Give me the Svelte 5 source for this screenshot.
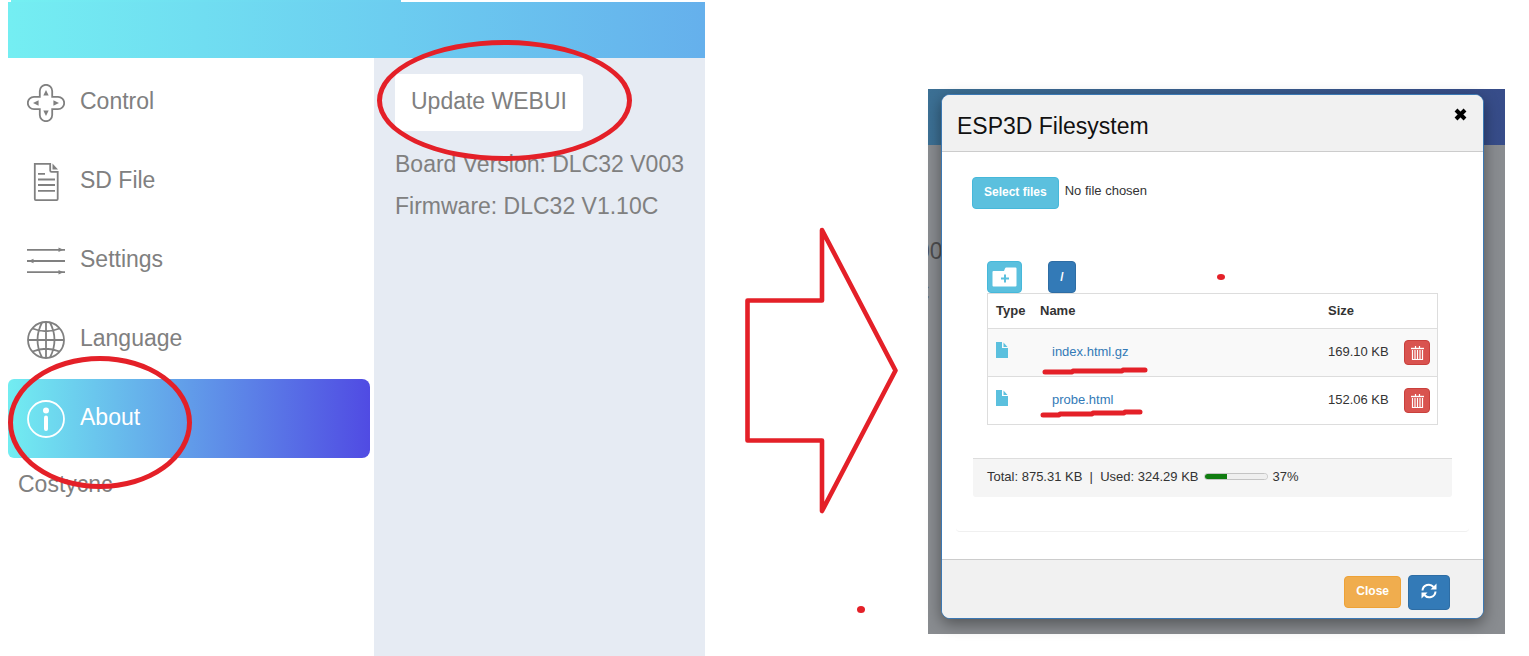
<script>
  const menu = [
    { id: 'control', label: 'Control' },
    { id: 'sd', label: 'SD File' },
    { id: 'settings', label: 'Settings' },
    { id: 'language', label: 'Language' },
    { id: 'about', label: 'About' }
  ];
  let active = $state('about');

  const files = [
    { name: 'index.html.gz', size: '169.10 KB', mark: 'M3 5H30L31 4H80L81 3H103', cls: 'first' },
    { name: 'probe.html', size: '152.06 KB', mark: 'M3 7H19L20 6H52L53 5H84L85 4H100', cls: 'second' }
  ];
  let picker;
</script>

<main class="guide">
  <section class="app">
    <div class="tab"></div>
    <header class="topbar"></header>
    <div class="columns">
      <nav class="sidebar">
        {#each menu as item}
          <button class="item" class:active={active === item.id} onclick={() => (active = item.id)}>
            <svg class="icon" viewBox="0 0 38 38" fill="none" stroke="currentColor" stroke-width="1.8" aria-hidden="true">
              {#if item.id === 'control'}
                <path d="M12.8 12.8V7a6.2 6.2 0 0 1 12.4 0v5.8H31a6.2 6.2 0 0 1 0 12.4h-5.8V31a6.2 6.2 0 0 1-12.4 0v-5.8H7a6.2 6.2 0 0 1 0-12.4z" />
                <path d="M19 6l2.7 5.6h-5.4zM19 32l2.7-5.6h-5.4zM6 19l5.6-2.7v5.4zM32 19l-5.6-2.7v5.4z" fill="currentColor" stroke="none" />
              {:else if item.id === 'sd'}
                <path d="M7.8 .9h15.4v6.6q0 1.3 1.3 1.3h6.2v27.3q0 1-1 1H8.8q-1 0-1-1z" />
                <path d="M11 10.8h7M11 16.5h17M11 22h17M11 27.8h17" />
                <path d="M25.5 .6l5.5 5.8h-5.5z" fill="currentColor" stroke="none" />
              {:else if item.id === 'settings'}
                <path d="M0 7.8h38M0 19h38M0 30.2h38" />
                <path d="M31.500 5.500L36.500 7.800l-5 2.300zM6.500 16.700L1.500 19l5 2.300zM31.500 27.900L36.500 30.200l-5 2.300z" fill="currentColor" stroke="none" />
              {:else if item.id === 'language'}
                <circle cx="19" cy="19" r="18" />
                <path d="M19 1v36M1 19h36M15 1.500Q6 19 15 36.500M23 1.500Q32 19 23 36.500M5.500 7.500Q19 13 32.500 7.500M5.500 30.500Q19 25 32.500 30.500" />
              {:else}
                <circle cx="19" cy="19" r="18" />
                <circle cx="19" cy="10.500" r="3" fill="currentColor" stroke="none" />
                <path d="M19 17.500V29" stroke-width="4" stroke-linecap="round" />
              {/if}
            </svg>
            <span>{item.label}</span>
          </button>
        {/each}
        <p class="owner">Costycnc</p>
        <i class="ring ring-about"></i>
      </nav>
      <div class="details">
        <button class="update">Update WEBUI</button>
        <p>Board Version: DLC32 V003</p>
        <p>Firmware: DLC32 V1.10C</p>
        <i class="ring ring-update"></i>
      </div>
    </div>
  </section>

  <div class="step">
    <svg class="arrow" width="160" height="290" viewBox="0 0 160 290" aria-hidden="true">
      <path d="M84 5L157.500 145.500L84 286V215.500H9.500V75.500H84Z" fill="none" stroke="#e42028" stroke-width="4.600" stroke-linejoin="round" />
    </svg>
    <i class="dot"></i>
  </div>

  <section class="stage">
    <div class="backdrop">
      <div class="backbar"></div>
      <p class="behind">00</p>
      <p class="behind letter">C</p>
    </div>
    <div class="modal" role="dialog" aria-labelledby="title">
      <header class="head">
        <h1 id="title">ESP3D Filesystem</h1>
        <button class="dismiss" aria-label="Close dialog">
          <svg width="13" height="13" viewBox="0 0 13 13"><path d="M2 2l9 9M11 2l-9 9" stroke="#000" stroke-width="4" /></svg>
        </button>
      </header>

      <div class="body">
        <div class="group">
          <div class="choose">
            <button class="btn info" onclick={() => picker.click()}>Select files</button>
            <input bind:this={picker} type="file" multiple hidden aria-label="Select files" />
            <span>No file chosen</span>
          </div>

          <div class="listing">
            <div class="tools">
              <button class="btn info folder" aria-label="Create folder">
                <svg width="25" height="20" viewBox="0 0 25 20">
                  <path d="M.5 5q0-1 1-1H12L13 1.500q.300-1 1.300-1h9.200q1 0 1 1v17q0 1-1 1h-22q-1 0-1-1z" fill="#fff" />
                  <path d="M13 7.500v8M9 11.500h8" stroke="#5bc0de" stroke-width="2" />
                </svg>
              </button>
              <button class="btn primary root">/</button>
              <i class="dot"></i>
            </div>
            <table>
              <colgroup><col class="c-type" /><col /><col class="c-size" /><col class="c-act" /></colgroup>
              <thead>
                <tr><th>Type</th><th>Name</th><th>Size</th><th></th></tr>
              </thead>
              <tbody>
                {#each files as file}
                  <tr>
                    <td>
                      <svg class="file" width="12" height="16" viewBox="0 0 12 16" aria-hidden="true">
                        <path d="M0 0h6v6h6v10H0z" fill="#5bc0de" />
                        <path d="M7.500 .5L11.500 5h-4z" fill="#5bc0de" />
                      </svg>
                    </td>
                    <td class="name">
                      <a href="#{file.name}">{file.name}</a>
                      <svg class="mark {file.cls}" width="110" height="10" viewBox="0 0 110 10" aria-hidden="true">
                        <path d={file.mark} fill="none" stroke="#e42028" stroke-width="5" stroke-linecap="round" stroke-linejoin="round" />
                      </svg>
                    </td>
                    <td>{file.size}</td>
                    <td class="act">
                      <button class="btn danger" aria-label="Delete {file.name}">
                        <svg width="13" height="14" viewBox="0 0 13 14" fill="none" stroke="#fff">
                          <path d="M0 2.500h13" stroke-width="1.400" />
                          <path d="M4.500 0v2M8.500 0v2" stroke-width="1.200" />
                          <path d="M1.500 4v9.500h10V4M4 4v9M6.500 4v9M9 4v9" stroke-width="1.200" />
                        </svg>
                      </button>
                    </td>
                  </tr>
                {/each}
              </tbody>
            </table>
          </div>

          <div class="status">
            <span class="total">Total: 875.31 KB &nbsp;|&nbsp; Used: 324.29 KB</span>
            <progress value="37" max="100" aria-label="Used space"></progress>
            <span>37%</span>
          </div>
        </div>
      </div>

      <footer class="foot">
        <button class="btn warning">Close</button>
        <button class="btn primary refresh" aria-label="Refresh">
          <svg width="16" height="16" viewBox="0 0 16 16" fill="none" stroke="#fff" stroke-width="2">
            <path d="M1.500 7.500A6.200 6.200 0 0 1 12.500 4M14.500 8.500A6.200 6.200 0 0 1 3.500 12" />
            <path d="M15.500 .5v6h-6zM.5 15.500v-6h6z" fill="#fff" stroke="none" />
          </svg>
        </button>
      </footer>
    </div>
  </section>
</main>

<style>
  :global(body) { background: #fff; }
  .guide, .guide * { box-sizing: border-box; }
  .guide {
    display: grid;
    grid-template-columns: 697fr 223px 577fr;
    min-height: 100vh;
    padding: 0 24px 0 8px;
    font-family: "Liberation Sans", Arial, sans-serif;
  }
  p, h1 { margin: 0; font-weight: 400; }
  button { font-family: inherit; cursor: pointer; }
  svg { display: block; }

  .app { display: flex; flex-direction: column; color: #808080; font-size: 23px; }
  .tab { width: 56%; height: 2px; margin-left: 3px; background: linear-gradient(90deg, #74f0f2, #6ccdf0); }
  .topbar { height: 56px; background: linear-gradient(90deg, #74eef2, #6ccdf0 55%, #65b0ec); }
  .columns { flex: 1; display: grid; grid-template-columns: 366fr 331fr; }
  .sidebar { position: relative; padding: 5px 4px 0 0; }
  .item {
    display: flex;
    align-items: center;
    gap: 15px;
    width: 100%;
    height: 79px;
    padding: 0 19px;
    border: 0;
    border-radius: 6px 8px 8px 6px;
    background: none;
    color: inherit;
    font-size: 23px;
    text-align: left;
  }
  .item span { padding-bottom: 3px; }
  .icon { width: 38px; height: 38px; flex: none; }
  .item.active { background: linear-gradient(90deg, #72edf1, #64a9ea 42%, #504be3); color: #fff; }
  .owner { padding: 13px 10px; line-height: 26px; }
  .details { position: relative; padding: 16px 21px; background: #e6ebf3; }
  .details p { line-height: 42px; white-space: nowrap; }
  .update {
    height: 57px;
    margin-bottom: 12px;
    padding: 0 16px 3px;
    border: 0;
    border-radius: 4px;
    background: #fff;
    color: inherit;
    font-size: 23px;
    white-space: nowrap;
  }
  .ring { position: absolute; border: 5px solid #e42028; border-radius: 50%; pointer-events: none; }
  .ring-about { left: 0; top: 298px; width: 184px; height: 133px; }
  .ring-update { left: 3px; top: -18px; width: 255px; height: 121px; }

  .step { display: flex; flex-direction: column; align-items: center; padding-top: 225px; }
  .arrow { margin-left: 3px; }
  .dot { display: block; width: 8px; height: 7px; border-radius: 50%; background: #e42028; }
  .step .dot { margin: 91px 0 0 88px; }

  .stage { position: relative; align-self: start; margin-top: 89px; padding: 5px 21px 15px 13px; }
  .backdrop { position: absolute; inset: 0; overflow: hidden; background: #898c90; }
  .backbar { height: 56px; margin-bottom: 85px; background: linear-gradient(90deg, #3c7094, #374c89); }
  .behind { margin-left: -11px; color: #4d4d4f; font-size: 23px; line-height: 42px; }
  .letter { margin-left: -15px; }
  .modal {
    position: relative;
    border: 1px solid #3b78b3;
    border-radius: 9px;
    background: #fff;
    box-shadow: 0 5px 15px rgba(0, 0, 0, 0.4);
    color: #333;
    font-size: 13px;
    overflow: hidden;
  }
  .head {
    display: flex;
    justify-content: space-between;
    align-items: flex-start;
    height: 57px;
    padding: 13px 16px 0 15px;
    border-bottom: 1px solid #ccc;
    background: #f1f1f1;
  }
  h1 { color: #111; font-size: 23px; line-height: 36px; }
  .dismiss { padding: 0; border: 0; background: none; }
  .body { padding: 0 14px 27px; }
  .group { padding: 25px 16px 34px; border-bottom: 1px solid #f0f0f0; border-radius: 4px; }
  .choose { display: flex; align-items: center; gap: 6px; }
  .choose span { padding-bottom: 5px; }
  .btn {
    display: flex;
    align-items: center;
    justify-content: center;
    height: 32px;
    padding: 0 11px 3px;
    border: 1px solid;
    border-radius: 4px;
    color: #fff;
    font-size: 12px;
    font-weight: 700;
    white-space: nowrap;
  }
  .info { background: #5bc0de; border-color: #46b8da; }
  .primary { background: #337ab7; border-color: #2e6da4; }
  .warning { background: #f0ad4e; border-color: #eea236; }
  .danger { width: 26px; height: 25px; padding: 0; background: #d9534f; border-color: #c9403c; }
  .listing { padding: 52px 15px 33px 15px; }
  .tools { display: flex; gap: 26px; align-items: center; }
  .folder { width: 35px; padding: 0; }
  .root { width: 28px; padding: 0; }
  .tools .dot { margin-left: 115px; height: 6px; }
  table { width: 100%; table-layout: fixed; border-collapse: separate; border-spacing: 0; border: 1px solid #ddd; }
  .c-type { width: 44px; }
  .c-size { width: 76px; }
  .c-act { width: 41px; }
  th { height: 34px; padding: 0 8px 2px; text-align: left; }
  td { height: 48px; padding: 0 8px 2px; border-top: 1px solid #ddd; white-space: nowrap; }
  tbody tr:first-child { background: #f9f9f9; }
  .name { position: relative; padding-left: 20px; }
  .name a { color: #337ab7; text-decoration: none; }
  .act { padding: 0 7px 0 8px; }
  .file { margin-top: -3px; }
  .mark { position: absolute; pointer-events: none; }
  .first { left: 10px; top: 38px; }
  .second { left: 8px; top: 31px; }
  .status {
    display: flex;
    align-items: center;
    gap: 5px;
    height: 39px;
    margin: 0 1px;
    padding: 0 14px 3px;
    border-top: 1px solid #ddd;
    border-radius: 0 0 3px 3px;
    background: #f5f5f5;
    white-space: nowrap;
  }
  progress { width: 64px; height: 7px; appearance: none; border: 1px solid #c4c4c4; border-radius: 4px; background: #efefef; overflow: hidden; }
  progress::-webkit-progress-bar { background: #efefef; }
  progress::-webkit-progress-value { background: #107c10; }
  .foot {
    display: flex;
    justify-content: flex-end;
    align-items: center;
    gap: 7px;
    height: 59px;
    padding: 6px 33px 0 0;
    border-top: 1px solid #ccc;
    background: #f1f1f1;
  }
  .refresh { width: 42px; height: 35px; }
</style>
